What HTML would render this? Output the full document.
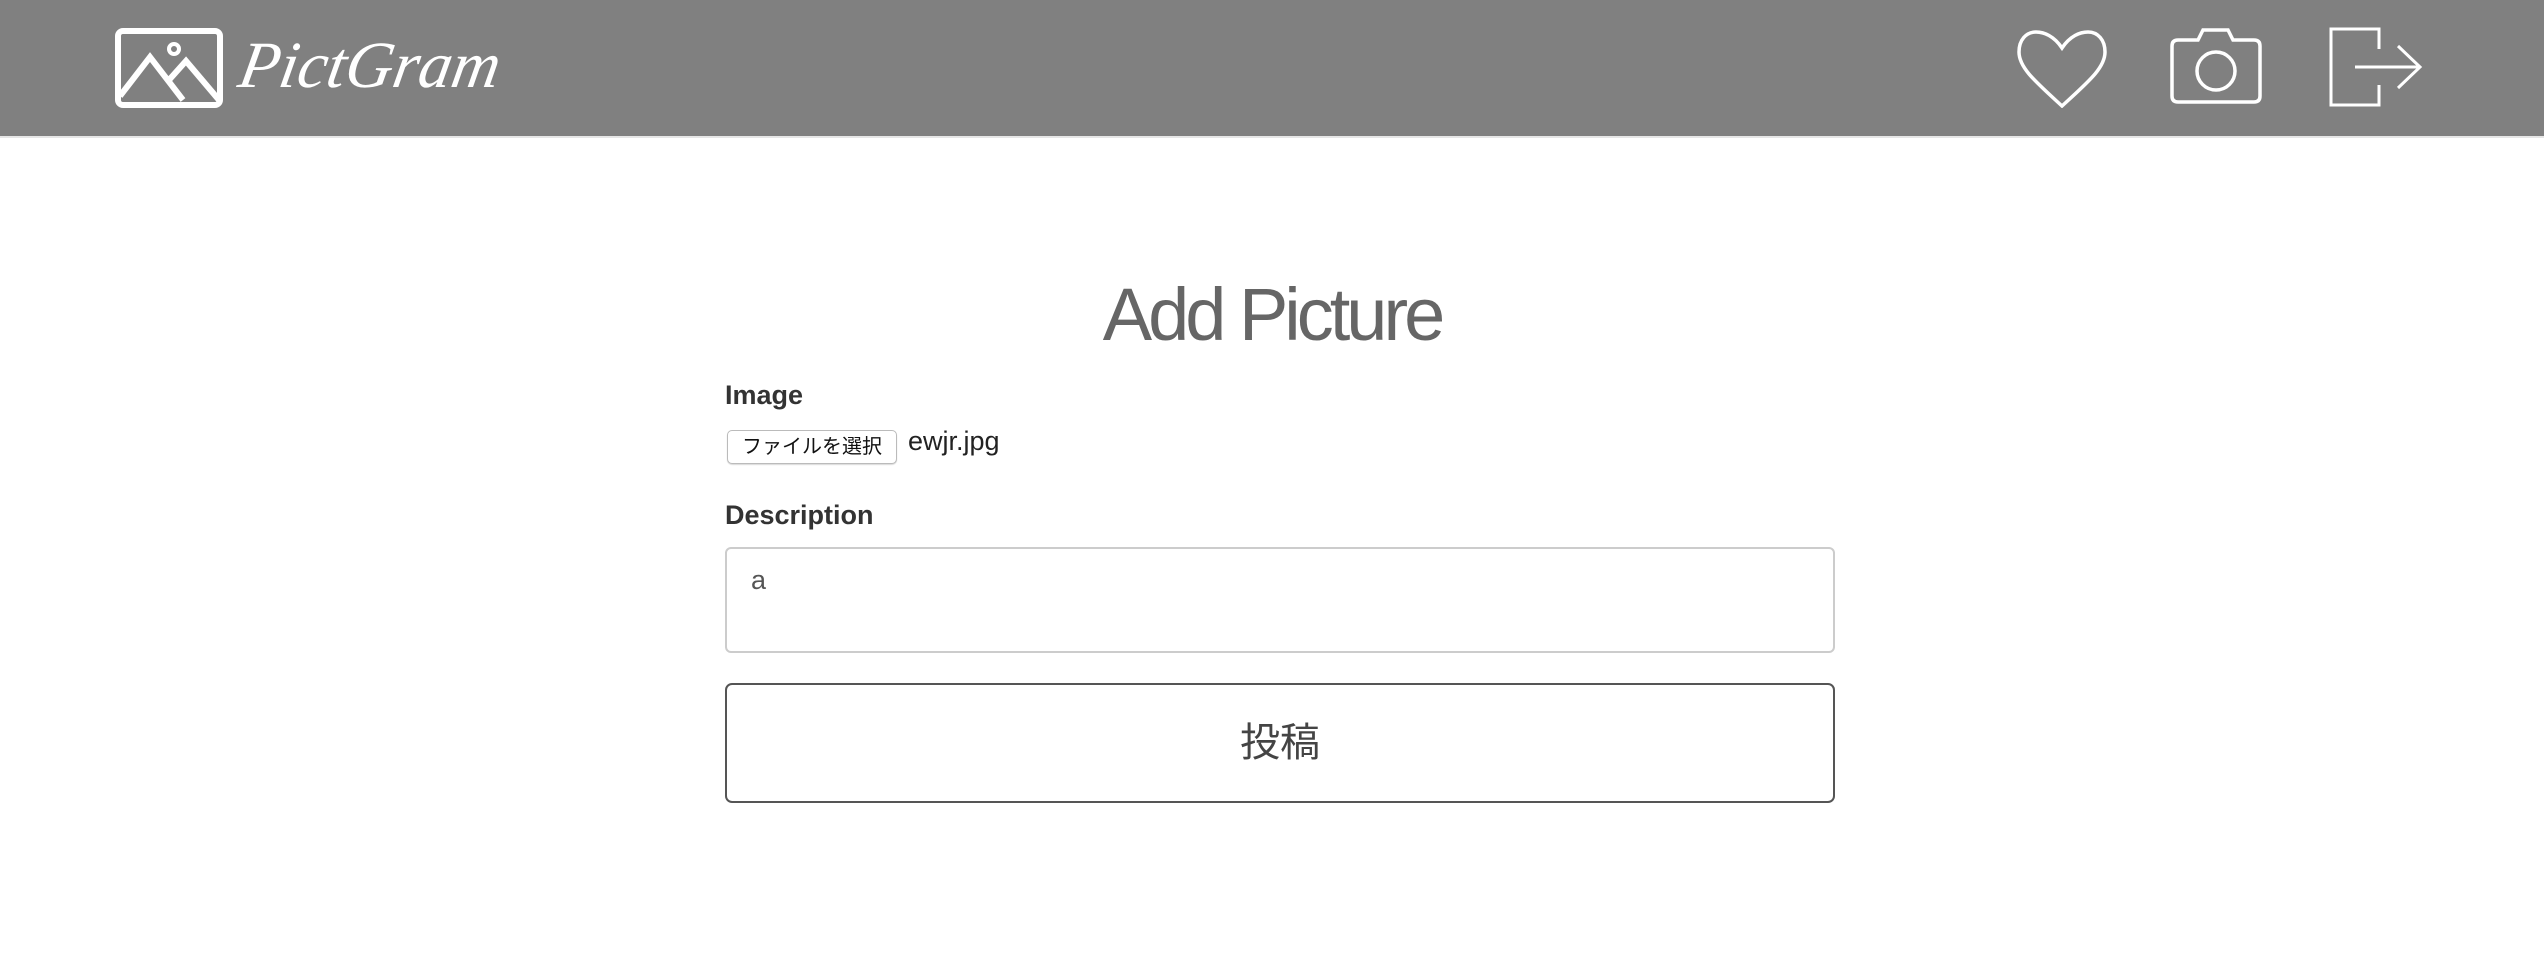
<!DOCTYPE html>
<html><head><meta charset="utf-8"><style>
*{box-sizing:border-box;margin:0;padding:0}
body{width:2544px;height:956px;background:#fff;font-family:"Liberation Sans","Noto Sans CJK JP",sans-serif;color:#333;position:relative;overflow:hidden}
.hdr{position:absolute;left:0;top:0;width:2544px;height:138px;background:#808080;border-bottom:2px solid #e6e6e6}
.logo{position:absolute;left:240px;top:28px;font-family:"Liberation Serif",serif;font-style:italic;font-weight:normal;font-size:66px;color:#fff;letter-spacing:0px;transform:skewX(-10deg)}
svg{position:absolute}
.title{position:absolute;left:0;width:2544px;text-align:center;top:272px;font-size:74px;font-weight:normal;color:#666;letter-spacing:-4px}
.lbl{position:absolute;left:725px;font-size:27px;font-weight:bold;color:#333}
.fbtn{position:absolute;left:727px;top:430px;width:170px;height:34px;border:1px solid #bbb;border-radius:5px;background:#fff;font-size:20px;color:#111;text-align:center;line-height:32px;box-shadow:0 1px 1px rgba(0,0,0,.15)}
.fname{position:absolute;left:908px;top:426px;font-size:27px;color:#222}
.ta{position:absolute;left:725px;top:547px;width:1110px;height:106px;border:2px solid #ccc;border-radius:6px;background:#fff}
.ta span{position:absolute;left:24px;top:16px;font-size:27px;color:#555}
.sub{position:absolute;left:725px;top:683px;width:1110px;height:120px;border:2px solid #555;border-radius:7px;text-align:center;line-height:116px;font-size:40px;color:#444}
</style></head><body>
<div class="hdr">
<svg style="left:115px;top:28px" width="108" height="80" viewBox="0 0 108 80"><rect x="3" y="3" width="102" height="74" rx="5" fill="none" stroke="#fff" stroke-width="6"/><polyline points="5,68 35,29 68,72" fill="none" stroke="#fff" stroke-width="6"/><polyline points="54,52 71,33 104,72" fill="none" stroke="#fff" stroke-width="6"/><circle cx="59" cy="21" r="5" fill="none" stroke="#fff" stroke-width="4"/></svg>
<div class="logo">PictGram</div>
<svg style="left:2016px;top:28px" width="92" height="80" viewBox="0 0 92 80"><path d="M46 20 C38 8 28 4 20 4 C10 4 3 12 3 24 C3 40 20 54 46 78 C72 54 89 40 89 24 C89 12 82 4 72 4 C64 4 54 8 46 20Z" fill="none" stroke="#fff" stroke-width="3.5"/></svg>
<svg style="left:2168px;top:28px" width="96" height="78" viewBox="0 0 96 78"><path d="M4 18 Q4 12 10 12 L30 12 L35 2 L60 2 L65 12 L86 12 Q92 12 92 18 L92 68 Q92 74 86 74 L10 74 Q4 74 4 68Z" fill="none" stroke="#fff" stroke-width="3.5"/><circle cx="48" cy="43" r="19" fill="none" stroke="#fff" stroke-width="3.5"/></svg>
<svg style="left:2328px;top:26px" width="96" height="82" viewBox="0 0 96 82"><polyline points="51,23 51,3 3,3 3,79 51,79 51,59" fill="none" stroke="#fff" stroke-width="3"/><line x1="27" y1="41" x2="92" y2="41" stroke="#fff" stroke-width="3"/><polyline points="70,20 92,41 70,62" fill="none" stroke="#fff" stroke-width="3"/></svg>
</div>
<div class="title">Add Picture</div>
<div class="lbl" style="top:380px">Image</div>
<div class="fbtn">ファイルを選択</div>
<div class="fname">ewjr.jpg</div>
<div class="lbl" style="top:500px">Description</div>
<div class="ta"><span>a</span></div>
<div class="sub">投稿</div>
</body></html>
